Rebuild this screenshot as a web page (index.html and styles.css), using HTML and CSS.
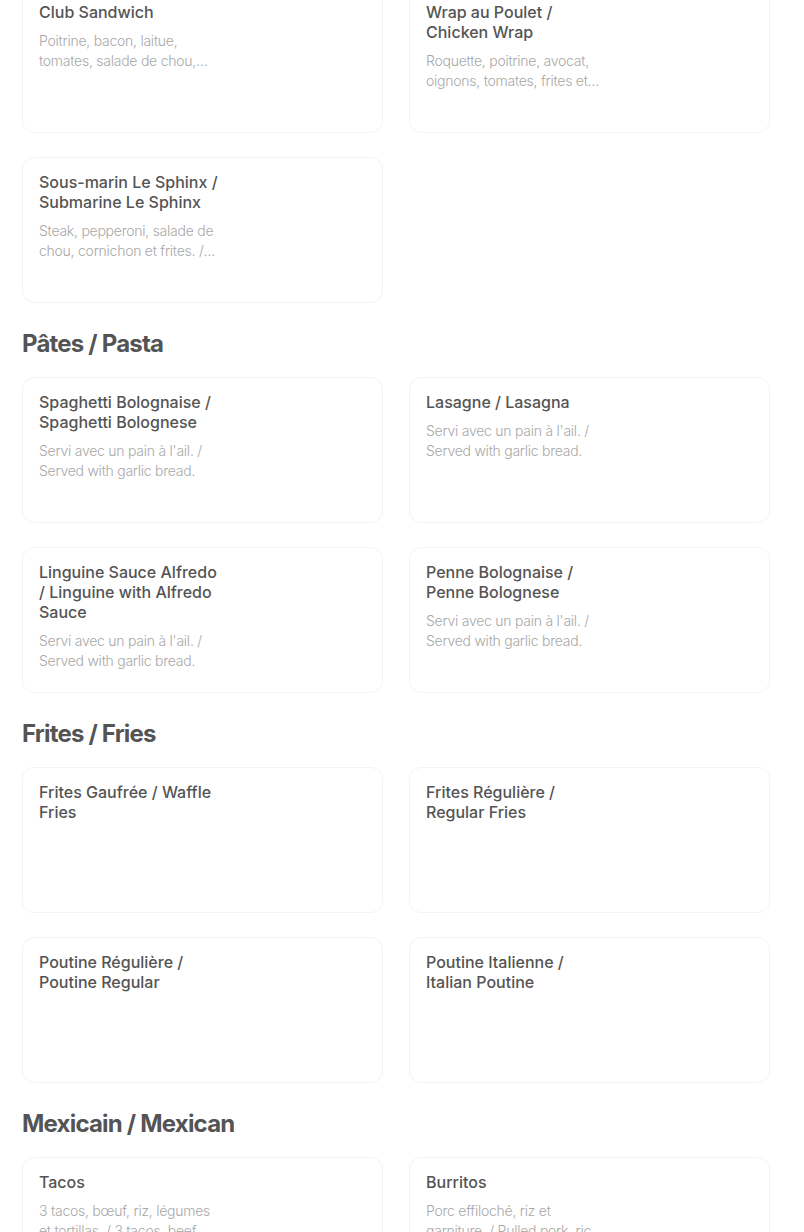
FILE: index.html
```html
<!DOCTYPE html>
<html lang="fr">
<head>
<meta charset="utf-8">
<title>Menu</title>
<link rel="stylesheet" href="styles.css">
</head>
<body>
<main class="menu">
  <section class="section">
    <div class="grid">
      <div class="card">
        <div class="info">
          <h3 class="title">Club Sandwich</h3>
          <p class="desc">Poitrine, bacon, laitue, tomates, salade de chou, cornichon et frites. / Chicken breast, bacon, lettuce, tomatoes, coleslaw, pickle and fries.</p>
        </div>
      </div>
      <div class="card">
        <div class="info">
          <h3 class="title">Wrap au Poulet / Chicken Wrap</h3>
          <p class="desc">Roquette, poitrine, avocat, oignons, tomates, frites et salade de chou. / Arugula, chicken breast, avocado, onions, tomatoes, fries and coleslaw.</p>
        </div>
      </div>
      <div class="card">
        <div class="info">
          <h3 class="title">Sous-marin Le Sphinx / Submarine Le Sphinx</h3>
          <p class="desc">Steak, pepperoni, salade de chou, cornichon et frites. / Steak, pepperoni, coleslaw, pickle and fries.</p>
        </div>
      </div>
    </div>
  </section>

  <section class="section">
    <h2 class="heading">Pâtes / Pasta</h2>
    <div class="grid">
      <div class="card">
        <div class="info">
          <h3 class="title">Spaghetti Bolognaise / Spaghetti Bolognese</h3>
          <p class="desc">Servi avec un pain à l'ail. / Served with garlic bread.</p>
        </div>
      </div>
      <div class="card">
        <div class="info">
          <h3 class="title">Lasagne / Lasagna</h3>
          <p class="desc">Servi avec un pain à l'ail. / Served with garlic bread.</p>
        </div>
      </div>
      <div class="card">
        <div class="info">
          <h3 class="title">Linguine Sauce Alfredo / Linguine with Alfredo Sauce</h3>
          <p class="desc">Servi avec un pain à l'ail. / Served with garlic bread.</p>
        </div>
      </div>
      <div class="card">
        <div class="info">
          <h3 class="title">Penne Bolognaise / Penne Bolognese</h3>
          <p class="desc">Servi avec un pain à l'ail. / Served with garlic bread.</p>
        </div>
      </div>
    </div>
  </section>

  <section class="section">
    <h2 class="heading">Frites / Fries</h2>
    <div class="grid">
      <div class="card">
        <div class="info">
          <h3 class="title">Frites Gaufrée / Waffle Fries</h3>
        </div>
      </div>
      <div class="card">
        <div class="info">
          <h3 class="title">Frites Régulière / Regular Fries</h3>
        </div>
      </div>
      <div class="card">
        <div class="info">
          <h3 class="title">Poutine Régulière / Poutine Regular</h3>
        </div>
      </div>
      <div class="card">
        <div class="info">
          <h3 class="title">Poutine Italienne / Italian Poutine</h3>
        </div>
      </div>
    </div>
  </section>

  <section class="section">
    <h2 class="heading">Mexicain / Mexican</h2>
    <div class="grid">
      <div class="card">
        <div class="info">
          <h3 class="title">Tacos</h3>
          <p class="desc">3 tacos, bœuf, riz, légumes et tortillas. / 3 tacos, beef, rice, vegetables and tortillas.</p>
        </div>
      </div>
      <div class="card">
        <div class="info">
          <h3 class="title">Burritos</h3>
          <p class="desc">Porc effiloché, riz et garniture. / Pulled pork, rice and toppings.</p>
        </div>
      </div>
    </div>
  </section>
</main>
</body>
</html>
```

FILE: styles.css
```css
html, body {
  margin: 0;
  padding: 0;
  background: #ffffff;
}

body {
  font-family: Inter, "Noto Sans", "Liberation Sans", sans-serif;
  color: #545454;
  overflow: hidden;
}

.menu {
  width: 748px;
  margin: -14px 0 0 22px;
  display: flex;
  flex-direction: column;
  gap: 24px;
}

.section {
  display: flex;
  flex-direction: column;
  gap: 17px;
}

.section:first-child .grid {
  padding-top: 1px;
}

.heading {
  margin: 1px 0 0;
  font-size: 24px;
  line-height: 32px;
  font-weight: 700;
  letter-spacing: -0.8px;
  color: #545454;
}

.grid {
  display: grid;
  grid-template-columns: 1fr 1fr;
  column-gap: 26px;
  row-gap: 24px;
}

.card {
  box-sizing: border-box;
  height: 146px;
  border: 1px solid #f3f3f3;
  border-radius: 12px;
  padding: 14px 16px 16px;
  display: flex;
}

.info {
  width: 182px;
  display: flex;
  flex-direction: column;
  gap: 9px;
}

.title {
  margin: 0;
  font-size: 16px;
  line-height: 20px;
  font-weight: 500;
  color: #545454;
}

.desc {
  margin: 0;
  font-size: 14px;
  line-height: 20px;
  font-weight: 300;
  letter-spacing: -0.25px;
  color: #a8a8a8;
  display: -webkit-box;
  -webkit-box-orient: vertical;
  -webkit-line-clamp: 2;
  overflow: hidden;
}
```
